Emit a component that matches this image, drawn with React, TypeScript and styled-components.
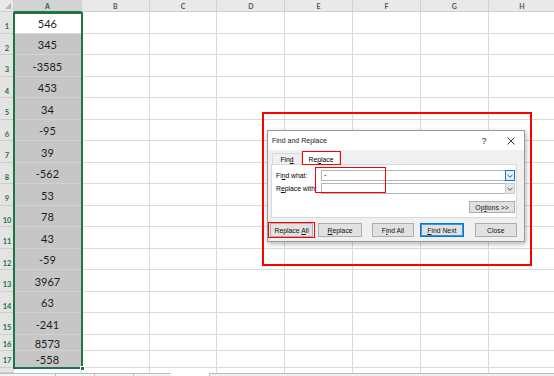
import React from "react";
import styled, { createGlobalStyle } from "styled-components";

const Global = createGlobalStyle`
  html, body { margin: 0; padding: 0; background: #ffffff; overflow: hidden; }
  * { box-sizing: border-box; }
`;

const GREEN = "#217346";
const GRID = "#dadada";

const Page = styled.div`
  position: relative;
  width: 554px;
  height: 376px;
  overflow: hidden;
  display: flex;
  flex-direction: column;
  background: #fff;
`;

const Sheet = styled.div`
  display: grid;
  grid-template-columns: 14px repeat(8, 67.8px);
  grid-template-rows: 12px repeat(15, 21.5px) repeat(2, 16.5px) 5px;
  font-family: Lato, "Open Sans", sans-serif;
`;

const Corner = styled.div`
  grid-row: 1;
  grid-column: 1;
  background: #e9e9e9;
  border-right: 1px solid #d0d0d0;
  border-bottom: 1px solid #cfcfcf;
  display: flex;
  justify-content: flex-end;
  align-items: flex-end;
  padding: 0 2px 2px 0;
`;

const CornerTriangle = styled.div`
  width: 0;
  height: 0;
  border-left: 6px solid transparent;
  border-bottom: 6px solid #b5b5b5;
`;

const ColHead = styled.div<{ $col: number; $selected?: boolean }>`
  grid-row: 1;
  grid-column: ${(p) => p.$col};
  background: ${(p) => (p.$selected ? "#d3d3d3" : "#e9e9e9")};
  border-right: 1px solid #d2d2d2;
  border-bottom: 1px solid ${(p) => (p.$selected ? GREEN : "#cfcfcf")};
  color: ${(p) => (p.$selected ? "#1f5f3b" : "#555555")};
  font-size: 7px;
  font-weight: 700;
  display: flex;
  align-items: center;
  justify-content: center;
  padding-top: 1px;
`;

const RowHead = styled.div<{ $row: number }>`
  grid-row: ${(p) => p.$row};
  grid-column: 1;
  background: #e4e4e4;
  border-bottom: 1px solid #cdcdcd;
  color: ${GREEN};
  font-size: 7.5px;
  font-weight: 700;
  display: flex;
  align-items: flex-end;
  justify-content: center;
  padding-bottom: 2px;
  line-height: 1;
`;

const Cell = styled.div<{ $row: number; $col: number; $selected?: boolean; $last?: boolean }>`
  grid-row: ${(p) => p.$row};
  grid-column: ${(p) => p.$col};
  background: ${(p) => (p.$selected ? "#c6c6c6" : "#ffffff")};
  border-right: 1px solid ${GRID};
  border-bottom: ${(p) => (p.$last ? "none" : `1px solid ${p.$selected ? "#d2d2d2" : GRID}`)};
  color: #1c1c1c;
  font-size: 11px;
  display: flex;
  align-items: center;
  justify-content: center;
  padding-top: 2px;
  line-height: 1;
`;

const SelectionFrame = styled.div`
  grid-column: 2 / 3;
  grid-row: 2 / 19;
  margin: 0 -1px -1px -1px;
  border: 2px solid ${GREEN};
  position: relative;
  z-index: 1;
  pointer-events: none;
`;

const FillHandle = styled.div`
  position: absolute;
  right: -4px;
  bottom: -4px;
  width: 5px;
  height: 5px;
  background: ${GREEN};
  border: 1px solid #ffffff;
`;

const BottomStrip = styled.div`
  flex: 1;
  display: flex;
`;

const TabsArea = styled.div`
  width: 171px;
  display: flex;
  border-top: 1px solid #bdbdbd;
  background: #f4f4f4;
`;

const TabStub = styled.div<{ $w: number }>`
  width: ${(p) => p.$w}px;
  border-right: 1px solid #bdbdbd;
`;

const StripGap = styled.div`
  width: 38px;
`;

const ScrollArea = styled.div`
  flex: 1;
  border-top: 1px solid #bdbdbd;
  border-left: 1px solid #bdbdbd;
  background: #f0f0f0;
`;

/* ---------- Dialog ---------- */

const Dialog = styled.div`
  position: absolute;
  left: 267px;
  top: 130px;
  width: 258px;
  height: 112px;
  border: 1px solid #9a9a9a;
  box-shadow: 1px 2px 5px rgba(0, 0, 0, 0.3);
  background: #f0f0f0;
  display: flex;
  flex-direction: column;
  font-family: "Liberation Sans", Arial, sans-serif;
  font-size: 6.8px;
  color: #000;
  z-index: 5;
`;

const TitleBar = styled.div`
  height: 19px;
  background: #ffffff;
  display: flex;
  align-items: center;
  padding: 0 3px 0 4px;
  flex-shrink: 0;
`;

const TitleText = styled.div`
  font-size: 7px;
  color: #1a1a1a;
`;

const TitleControls = styled.div`
  margin-left: auto;
  display: flex;
  gap: 7px;
`;

const TitleButton = styled.div`
  width: 20px;
  height: 14px;
  display: flex;
  align-items: center;
  justify-content: center;
  font-size: 8.5px;
  color: #222;
`;

const Body = styled.div`
  flex: 1;
  display: flex;
  flex-direction: column;
  padding: 0 7px 0 3px;
`;

const TabRow = styled.div`
  height: 14px;
  display: flex;
  align-items: flex-end;
  padding-left: 1px;
  position: relative;
  z-index: 2;
`;

const Tab = styled.div<{ $active?: boolean; $w: number }>`
  width: ${(p) => p.$w}px;
  height: ${(p) => (p.$active ? 14 : 11)}px;
  background: ${(p) => (p.$active ? "#ffffff" : "#f0f0f0")};
  border: 1px solid #d9d9d9;
  border-bottom: none;
  margin-bottom: ${(p) => (p.$active ? -1 : 0)}px;
  display: flex;
  align-items: center;
  justify-content: center;
  padding-top: 1px;
`;

const Panel = styled.div`
  width: 246px;
  height: 54px;
  background: #ffffff;
  border: 1px solid #d9d9d9;
  padding: 5px 1px 0 4px;
  display: flex;
  flex-direction: column;
`;

const FieldRow = styled.div<{ $mt?: number }>`
  display: flex;
  align-items: center;
  height: 11px;
  margin-top: ${(p) => p.$mt ?? 0}px;
`;

const Label = styled.div`
  width: 45px;
  white-space: nowrap;
`;

const Combo = styled.div`
  flex: 1;
  height: 11px;
  border: 1px solid #b4b4b4;
  background: #fff;
  display: flex;
  align-items: center;
`;

const ComboText = styled.div`
  flex: 1;
  padding-left: 2px;
  line-height: 1;
`;

const DropButton = styled.div<{ $focused?: boolean }>`
  width: 10px;
  height: 11px;
  margin: -1px -1px -1px 0;
  border: 1px solid ${(p) => (p.$focused ? "#0078d7" : "#cccccc")};
  background: ${(p) => (p.$focused ? "#e5f1fb" : "#e6e6e6")};
  display: flex;
  align-items: center;
  justify-content: center;
`;

const OptionsRow = styled.div`
  display: flex;
  justify-content: flex-end;
  margin-top: 7px;
`;

const Button = styled.div<{ $w: number; $ml?: number; $tall?: boolean; $default?: boolean }>`
  width: ${(p) => p.$w}px;
  height: ${(p) => (p.$tall ? 14 : 12)}px;
  margin-left: ${(p) => p.$ml ?? 0}px;
  background: #e1e1e1;
  border: 1px solid ${(p) => (p.$default ? "#0078d7" : "#adadad")};
  box-shadow: ${(p) => (p.$default ? "inset 0 0 0 1px #3c96e0" : "none")};
  display: flex;
  align-items: center;
  justify-content: center;
  white-space: pre;
  color: #111;
`;

const ButtonRow = styled.div`
  display: flex;
  margin-top: 5px;
  margin-left: -1px;
`;

const U = styled.span`
  text-decoration: underline;
  text-underline-offset: 1px;
`;

const RedBox = styled.div<{ $x: number; $y: number; $w: number; $h: number; $t?: number }>`
  position: absolute;
  left: ${(p) => p.$x}px;
  top: ${(p) => p.$y}px;
  width: ${(p) => p.$w}px;
  height: ${(p) => p.$h}px;
  border: ${(p) => p.$t ?? 1.5}px solid #ff0000;
  pointer-events: none;
  z-index: 6;
`;

const Chevron = () => (
  <svg width="6" height="4" viewBox="0 0 6 4">
    <polyline points="0.5,0.8 3,3.2 5.5,0.8" fill="none" stroke="#444" strokeWidth="0.9" />
  </svg>
);

const CloseIcon = () => (
  <svg width="8" height="8" viewBox="0 0 8 8">
    <path d="M0.5 0.5 L7.5 7.5 M7.5 0.5 L0.5 7.5" stroke="#222" strokeWidth="0.9" fill="none" />
  </svg>
);

const values = [546, 345, -3585, 453, 34, -95, 39, -562, 53, 78, 43, -59, 3967, 63, -241, 8573, -558];
const cols = ["A", "B", "C", "D", "E", "F", "G", "H"];

export default function App() {
  return (
    <>
      <Global />
      <Page>
        <Sheet>
          <Corner>
            <CornerTriangle />
          </Corner>
          {cols.map((c, ci) => (
            <ColHead key={c} $col={ci + 2} $selected={c === "A"}>
              {c}
            </ColHead>
          ))}
          {values.map((v, i) => (
            <React.Fragment key={i}>
              <RowHead $row={i + 2}>{i + 1}</RowHead>
              <Cell $row={i + 2} $col={2} $selected={i > 0}>
                {v}
              </Cell>
              {cols.slice(1).map((c, ci) => (
                <Cell key={c} $row={i + 2} $col={ci + 3} />
              ))}
            </React.Fragment>
          ))}
          <RowHead $row={19} />
          {cols.map((c, ci) => (
            <Cell key={c} $row={19} $col={ci + 2} $last />
          ))}
          <SelectionFrame>
            <FillHandle />
          </SelectionFrame>
        </Sheet>
        <BottomStrip>
          <TabsArea>
            <TabStub $w={56} />
            <TabStub $w={39} />
            <TabStub $w={39} />
          </TabsArea>
          <StripGap />
          <ScrollArea />
        </BottomStrip>

        <RedBox $x={262} $y={111.5} $w={270} $h={154} $t={2} />

        <Dialog>
          <TitleBar>
            <TitleText>Find and Replace</TitleText>
            <TitleControls>
              <TitleButton>?</TitleButton>
              <TitleButton>
                <CloseIcon />
              </TitleButton>
            </TitleControls>
          </TitleBar>
          <Body>
            <TabRow>
              <Tab $w={30}>
                Fin<U>d</U>
              </Tab>
              <Tab $w={38} $active>
                Re<U>p</U>lace
              </Tab>
            </TabRow>
            <Panel>
              <FieldRow>
                <Label>
                  Fi<U>n</U>d what:
                </Label>
                <Combo>
                  <ComboText>-</ComboText>
                  <DropButton $focused>
                    <Chevron />
                  </DropButton>
                </Combo>
              </FieldRow>
              <FieldRow $mt={2}>
                <Label>
                  R<U>e</U>place with:
                </Label>
                <Combo>
                  <ComboText />
                  <DropButton>
                    <Chevron />
                  </DropButton>
                </Combo>
              </FieldRow>
              <OptionsRow>
                <Button $w={46}>
                  Op<U>t</U>ions &gt;&gt;
                </Button>
              </OptionsRow>
            </Panel>
            <ButtonRow>
              <Button $w={44} $tall>
                {"Replace "}
                <U>A</U>ll
              </Button>
              <Button $w={44} $ml={5} $tall>
                <U>R</U>eplace
              </Button>
              <Button $w={43} $ml={10} $tall>
                F<U>i</U>nd All
              </Button>
              <Button $w={44} $ml={6} $tall $default>
                <U>F</U>ind Next
              </Button>
              <Button $w={43} $ml={11} $tall>
                Close
              </Button>
            </ButtonRow>
          </Body>
          <RedBox $x={34} $y={19.5} $w={39} $h={14.5} />
          <RedBox $x={47} $y={36} $w={71} $h={26} />
          <RedBox $x={0} $y={90.5} $w={47} $h={16.5} />
        </Dialog>
      </Page>
    </>
  );
}
